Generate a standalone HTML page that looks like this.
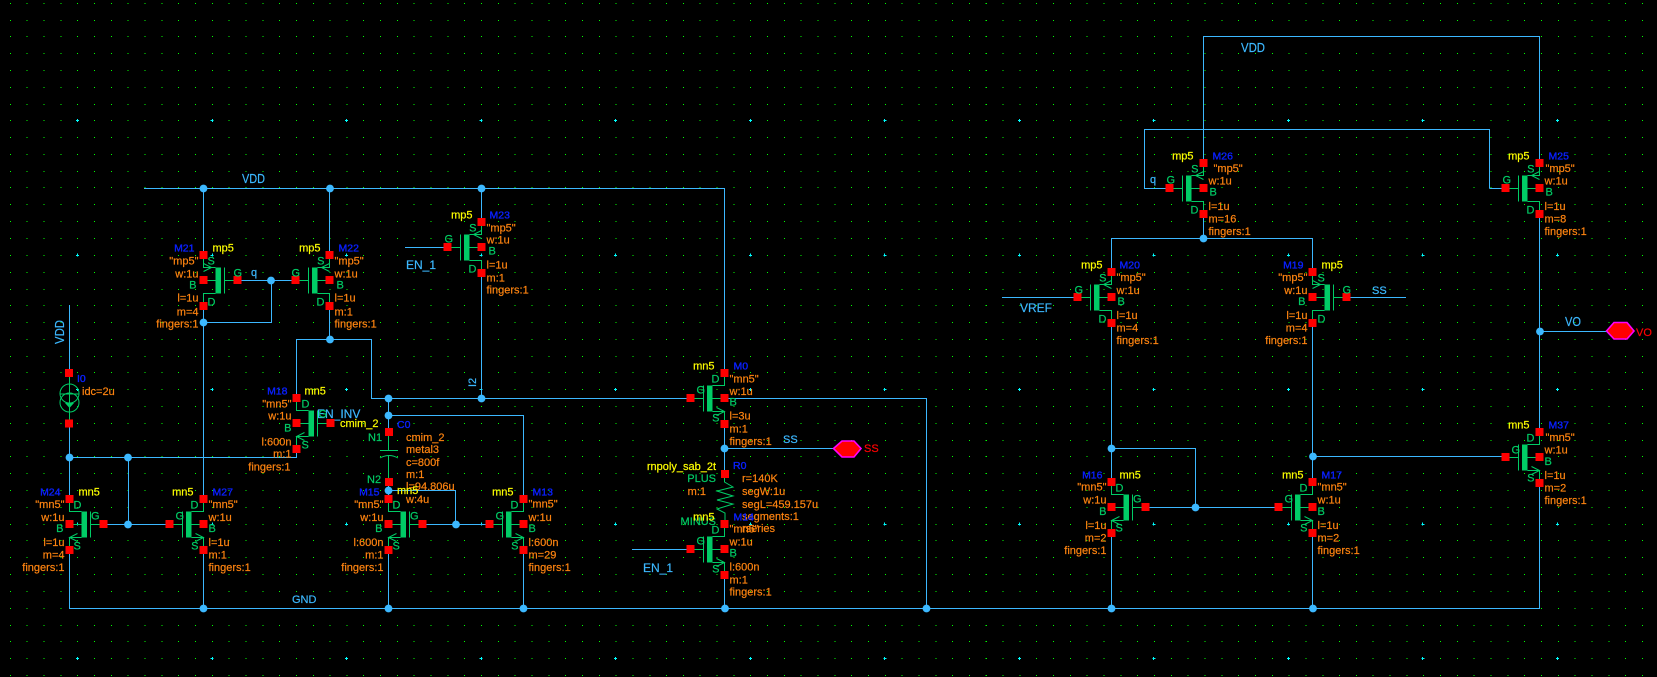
<!DOCTYPE html>
<html><head><meta charset="utf-8"><title>Schematic</title>
<style>
html,body{margin:0;padding:0;background:#000;width:1657px;height:677px;overflow:hidden}
svg{display:block}
text{font:11px "Liberation Sans",sans-serif;fill:#ff8410;stroke:#ff8410;stroke-width:.2px}
.e{text-anchor:end}
.o{fill:#ff8410}
.y{fill:#ffff00;stroke:#ffff00}
.b{fill:#0a20ff;stroke:#0a20ff;font-size:10.5px;stroke-width:.35px}
.g{fill:#00cc66;stroke:#00cc66}
.w{fill:#3cb8ff;stroke:#3cb8ff}
.l{fill:#3cb8ff;stroke:#3cb8ff;font-size:12px}
.t{fill:#3cb8ff;stroke:#3cb8ff;font-size:13px}
.r{fill:#ff0000;stroke:#ff0000}
</style></head><body>
<svg xmlns="http://www.w3.org/2000/svg" width="1657" height="677" viewBox="0 0 1657 677">
<defs>
<g id="pm" shape-rendering="crispEdges">
<path d="M0-25V-13H12M0 25V13H12M0 0H12M21-13V13M21 0H34" fill="none" stroke="#00cc66"/>
<rect x="12" y="-13" width="5.5" height="26" fill="#00cc66"/>
<path d="M0-17L8-13L0-9" fill="none" stroke="#00cc66" shape-rendering="auto"/>
<path d="M-4-29.5h8v8h-8zM-4-4.5h8v8h-8zM-4 21.5h8v8h-8zM30-4.5h8v8h-8z" fill="#ff0000"/>
</g>
<g id="nm" shape-rendering="crispEdges">
<path d="M0-25V-13H12M0 25V13H12M0 0H12M21-13V13M21 0H34" fill="none" stroke="#00cc66"/>
<rect x="12" y="-13" width="5.5" height="26" fill="#00cc66"/>
<path d="M8 9L0 13L8 17" fill="none" stroke="#00cc66" shape-rendering="auto"/>
<path d="M-4-29.5h8v8h-8zM-4-4.5h8v8h-8zM-4 21.5h8v8h-8zM30-4.5h8v8h-8z" fill="#ff0000"/>
</g>
</defs>
<rect width="1657" height="677" fill="#000"/>
<!-- grid -->
<path shape-rendering="crispEdges" fill="none" stroke="#00ff00" stroke-width="1" stroke-dasharray="1 15.825" d="M9.9 3.5H1657M9.9 20.5H1657M9.9 36.5H1657M9.9 53.5H1657M9.9 70.5H1657M9.9 87.5H1657M9.9 104.5H1657M9.9 120.5H1657M9.9 137.5H1657M9.9 154.5H1657M9.9 171.5H1657M9.9 187.5H1657M9.9 204.5H1657M9.9 221.5H1657M9.9 238.5H1657M9.9 255.5H1657M9.9 272.5H1657M9.9 289.5H1657M9.9 305.5H1657M9.9 322.5H1657M9.9 339.5H1657M9.9 356.5H1657M9.9 372.5H1657M9.9 389.5H1657M9.9 406.5H1657M9.9 423.5H1657M9.9 440.5H1657M9.9 456.5H1657M9.9 473.5H1657M9.9 490.5H1657M9.9 507.5H1657M9.9 524.5H1657M9.9 540.5H1657M9.9 557.5H1657M9.9 574.5H1657M9.9 591.5H1657M9.9 608.5H1657M9.9 625.5H1657M9.9 641.5H1657M9.9 658.5H1657M9.9 675.5H1657"/>
<path shape-rendering="crispEdges" fill="none" stroke="#00ffff" stroke-width="1" stroke-dasharray="3 131.55" d="M76 120.5H1657M76 255.5H1657M76 389.5H1657M76 524.5H1657M76 658.5H1657M77.5 119V677M212.5 119V677M346.5 119V677M481.5 119V677M615.5 119V677M750.5 119V677M884.5 119V677M1019.5 119V677M1153.5 119V677M1288.5 119V677M1422.5 119V677M1557.5 119V677"/>
<!-- wires -->
<path shape-rendering="crispEdges" fill="none" stroke="#3cb8ff" stroke-width="1" d="
M144 188.5H724.5V373
M203.5 188V255M203.5 305V499M203.5 549V608
M203.5 322.5H271.5V280.5M237 280.5H296
M329.5 188V255M329.5 305V339.5
M296.5 398V339.5H371.5V398.5H691
M388.5 398V432M388.5 415.5H523.5V499
M481.5 188V222M481.5 272V398
M405 247.5H447
M388.5 481V499M388.5 549V608
M388.5 490.5H455.5V524.5M422 524.5H490
M296.5 449V457.5H69.5
M128.5 457.5V524.5M103 524.5H170
M69.5 305V373M69.5 423V499M69.5 549V608.5H1539.5V482M1539.5 432V213M1539.5 163V36.5H1203.5V163
M523.5 549V608
M724.5 423V474M724.5 448.5H833
M724.5 575V608M632 549.5H691
M725 398.5H926.5V608
M1489.5 188.5V129.5H1144.5V188.5H1170M1489.5 188.5H1506
M1203.5 213V238.5M1111.5 272V238.5H1312.5V272
M1002 297.5H1078M1346 297.5H1406
M1111.5 322V482M1312.5 322V482
M1111.5 533V608M1312.5 533V608
M1111.5 448.5H1195.5V507.5M1145 507.5H1280
M1312.5 456.5H1506
M1539.5 331.5H1606"/>
<!-- junction dots -->
<g fill="#3cb8ff">
<circle cx="203.5" cy="188.5" r="3.9"/><circle cx="330" cy="188.5" r="3.9"/><circle cx="481.5" cy="188.5" r="3.9"/>
<circle cx="271" cy="280.5" r="3.9"/><circle cx="203.5" cy="322.5" r="3.9"/><circle cx="330" cy="339.5" r="3.9"/>
<circle cx="388.5" cy="398.5" r="3.9"/><circle cx="481.5" cy="398.5" r="3.9"/><circle cx="388.5" cy="415.5" r="3.9"/>
<circle cx="69.5" cy="457.5" r="3.9"/><circle cx="128" cy="457.5" r="3.9"/><circle cx="128" cy="524.5" r="3.9"/>
<circle cx="388.5" cy="490.5" r="3.9"/><circle cx="456" cy="524.5" r="3.9"/>
<circle cx="203.5" cy="608.5" r="3.9"/><circle cx="388.5" cy="608.5" r="3.9"/><circle cx="523.5" cy="608.5" r="3.9"/><circle cx="725" cy="608.5" r="3.9"/><circle cx="926.5" cy="608.5" r="3.9"/><circle cx="1111.5" cy="608.5" r="3.9"/><circle cx="1313" cy="608.5" r="3.9"/>
<circle cx="724.5" cy="448.5" r="3.9"/><circle cx="1203.5" cy="238.5" r="3.9"/><circle cx="1111.5" cy="448.5" r="3.9"/><circle cx="1195.5" cy="507.5" r="3.9"/><circle cx="1313" cy="456.5" r="3.9"/><circle cx="1540" cy="331.5" r="3.9"/>
</g>
<!-- wire labels -->
<text class="t" x="242" y="183" textLength="23" lengthAdjust="spacingAndGlyphs">VDD</text>
<text class="t" x="1241" y="52" textLength="24" lengthAdjust="spacingAndGlyphs">VDD</text>
<text class="w" x="292" y="603">GND</text>
<text class="w" x="251" y="276">q</text>
<text class="w" x="1150" y="183">q</text>
<text class="t" transform="translate(64 344) rotate(-90)" x="0" y="0" textLength="24" lengthAdjust="spacingAndGlyphs">VDD</text>
<text class="w" transform="translate(476 387) rotate(-90)" x="0" y="0">I2</text>
<text class="l" x="406" y="269">EN_1</text>
<text class="l" x="643" y="572">EN_1</text>
<text class="l" x="1020" y="312">VREF</text>
<text class="l" x="317" y="418">EN_INV</text>
<text class="w" x="1372" y="294">SS</text>
<text class="w" x="783" y="443">SS</text>
<text class="t" x="1565" y="326" textLength="16" lengthAdjust="spacingAndGlyphs">VO</text>
<!-- pins -->
<path d="M833.5 448.5L842 441H854L861 448.5L854 457H842Z" fill="#ff0000" stroke="#ff00ff" stroke-width="1.6"/>
<text class="r" x="864" y="452">SS</text>
<path d="M1606.5 331L1614 322.5H1627L1634 331L1627 339H1614Z" fill="#ff0000" stroke="#ff00ff" stroke-width="1.6"/>
<text class="r" x="1636" y="336">VO</text>
<!-- I0 -->
<g fill="none" stroke="#00cc66">
<path d="M69.5 373V423M60 394H79"/>
<circle cx="69.5" cy="393.5" r="9.5"/><circle cx="69.5" cy="402.5" r="9.5"/>
</g>
<path d="M65 403H74L69.5 408Z" fill="#00cc66"/>
<path shape-rendering="crispEdges" fill="#ff0000" d="M65 369h8v8h-8zM65 419.5h8v8h-8z"/>
<text class="b" x="77" y="382">I0</text>
<text x="82" y="395">idc=2u</text>
<!-- C0 -->
<path d="M388.5 432V450M380 450.5H398M380 458Q389 453 398 458M388.5 456V482" fill="none" stroke="#00cc66"/>
<path shape-rendering="crispEdges" fill="#ff0000" d="M385 428h8v8h-8zM385 478h8v8h-8z"/>
<text class="b" x="397" y="428">C0</text>
<text x="406" y="441">cmim_2</text><text x="406" y="453">metal3</text><text x="406" y="466">c=800f</text><text x="406" y="478">m:1</text><text x="406" y="490">l=94.806u</text><text x="406" y="503">w:4u</text>
<text class="y" x="397" y="494">mn5</text>
<text class="y" x="340" y="427">cmim_2</text>
<text class="g" x="368" y="441">N1</text><text class="g" x="367" y="483">N2</text>
<!-- R0 -->
<path d="M724.5 474V482L733 487L717 491L733 496L717 500L733 504L717 509L725 513V524" fill="none" stroke="#00cc66"/>
<path shape-rendering="crispEdges" fill="#ff0000" d="M721 470h8v8h-8z"/>
<text class="y e" x="716" y="470">rnpoly_sab_2t</text>
<text class="b" x="733" y="469">R0</text>
<text class="g e" x="716" y="482">PLUS</text>
<text class="e" x="706" y="495">m:1</text>
<text class="g e" x="716" y="525">MINUS</text>
<text x="742" y="482">r=140K</text><text x="742" y="495">segW:1u</text><text x="742" y="508">segL=459.157u</text><text x="742" y="520">segments:1</text><text x="742" y="532">rseries</text>

<!-- M21 -->
<g transform="translate(203.5 280.5)"><use href="#pm"/>
<text class="b e" x="-9" y="-29">M21</text><text class="y" x="9" y="-29">mp5</text><text class="e" x="-5" y="-16">"mp5"</text><text class="g" x="4" y="-16">S</text><text class="e" x="-5" y="-3">w:1u</text><text class="g e" x="-7" y="8">B</text><text class="g" x="30" y="-4">G</text><text class="e" x="-5" y="21">l=1u</text><text class="g" x="4" y="25">D</text><text class="e" x="-5" y="35">m=4</text><text class="e" x="-5" y="47">fingers:1</text></g>
<!-- M22 -->
<g transform="translate(329.5 280.5)"><use href="#pm" transform="scale(-1 1)"/>
<text class="b" x="9" y="-29">M22</text><text class="y e" x="-9" y="-29">mp5</text><text x="5" y="-16">"mp5"</text><text class="g e" x="-5" y="-16">S</text><text x="5" y="-3">w:1u</text><text class="g" x="7" y="8">B</text><text class="g" x="-38" y="-4">G</text><text x="5" y="21">l=1u</text><text class="g e" x="-5" y="25">D</text><text x="5" y="35">m:1</text><text x="5" y="47">fingers:1</text></g>
<!-- M23 -->
<g transform="translate(481.5 247.5)"><use href="#pm" transform="scale(-1 1)"/>
<text class="b" x="8" y="-29">M23</text><text class="y e" x="-9" y="-29">mp5</text><text x="5" y="-16">"mp5"</text><text class="g e" x="-5" y="-16">S</text><text x="5" y="-4">w:1u</text><text class="g" x="7" y="7">B</text><text class="g" x="-37" y="-5">G</text><text x="5" y="21">l=1u</text><text class="g e" x="-5" y="25">D</text><text x="5" y="34">m:1</text><text x="5" y="46">fingers:1</text></g>
<!-- M18 -->
<g transform="translate(296.5 423.5)"><use href="#nm"/>
<text class="b e" x="-9" y="-29">M18</text><text class="y" x="8" y="-29">mn5</text><text class="e" x="-5" y="-16">"mn5"</text><text class="g" x="5" y="-16">D</text><text class="e" x="-5" y="-4">w:1u</text><text class="g e" x="-5" y="8">B</text><text class="g" x="22" y="-6">G</text><text class="e" x="-5" y="22">l:600n</text><text class="g" x="5" y="25">S</text><text class="e" x="-5" y="34">m:1</text><text class="e" x="-6" y="47">fingers:1</text></g>
<!-- M24 -->
<g transform="translate(69.5 524.5)"><use href="#nm"/>
<text class="b e" x="-9" y="-29">M24</text><text class="y" x="9" y="-29">mn5</text><text class="e" x="-5" y="-16.5">"mn5"</text><text class="g" x="4" y="-16">D</text><text class="e" x="-5" y="-3.5">w:1u</text><text class="g e" x="-6" y="7.5">B</text><text class="g" x="21.5" y="-5">G</text><text class="e" x="-5" y="21.5">l=1u</text><text class="g" x="4" y="25">S</text><text class="e" x="-5" y="34">m=4</text><text class="e" x="-5" y="46.5">fingers:1</text></g>
<!-- M27 -->
<g transform="translate(203.5 524.5)"><use href="#nm" transform="scale(-1 1)"/>
<text class="b" x="9" y="-29">M27</text><text class="y e" x="-10" y="-29">mn5</text><text x="5" y="-16.5">"mn5"</text><text class="g e" x="-5" y="-16">D</text><text x="5" y="-3.5">w:1u</text><text class="g" x="5" y="7.5">B</text><text class="g" x="-28" y="-5">G</text><text x="5" y="21.5">l=1u</text><text class="g e" x="-5" y="25">S</text><text x="5" y="34">m:1</text><text x="5" y="46.5">fingers:1</text></g>
<!-- M15 -->
<g transform="translate(388.5 524.5)"><use href="#nm"/>
<text class="b e" x="-9" y="-29">M15</text><text class="e" x="-5" y="-16.5">"mn5"</text><text class="g" x="4" y="-16">D</text><text class="e" x="-5" y="-3.5">w:1u</text><text class="g e" x="-6" y="7.5">B</text><text class="g" x="21.5" y="-5">G</text><text class="e" x="-5" y="21.5">l:600n</text><text class="g" x="4" y="25">S</text><text class="e" x="-5" y="34">m:1</text><text class="e" x="-5" y="46.5">fingers:1</text></g>
<!-- M13 -->
<g transform="translate(523.5 524.5)"><use href="#nm" transform="scale(-1 1)"/>
<text class="b" x="9" y="-29">M13</text><text class="y e" x="-10" y="-29">mn5</text><text x="5" y="-17">"mn5"</text><text class="g e" x="-5" y="-16">D</text><text x="5" y="-3.5">w:1u</text><text class="g" x="5" y="7.5">B</text><text class="g" x="-28" y="-5">G</text><text x="5" y="21.5">l:600n</text><text class="g e" x="-5" y="25">S</text><text x="5" y="34">m=29</text><text x="5" y="46.5">fingers:1</text></g>
<!-- M0 -->
<g transform="translate(724.5 398.5)"><use href="#nm" transform="scale(-1 1)"/>
<text class="b" x="9" y="-29">M0</text><text class="y e" x="-10" y="-29">mn5</text><text x="5" y="-16">"mn5"</text><text class="g e" x="-5" y="-16">D</text><text x="5" y="-3.5">w:1u</text><text class="g" x="5" y="7">B</text><text class="g" x="-28" y="-5">G</text><text x="5" y="21">l=3u</text><text class="g e" x="-5" y="23">S</text><text x="5" y="34">m:1</text><text x="5" y="46.5">fingers:1</text></g>
<!-- M14 -->
<g transform="translate(724.5 549.5)"><use href="#nm" transform="scale(-1 1)"/>
<text class="b" x="9" y="-29">M14</text><text class="y e" x="-10" y="-29">mn5</text><text x="5" y="-17">"mn5"</text><text class="g e" x="-5" y="-16">D</text><text x="5" y="-4">w:1u</text><text class="g" x="5" y="7">B</text><text class="g" x="-28" y="-5">G</text><text x="5" y="21">l:600n</text><text class="g e" x="-5" y="23">S</text><text x="5" y="34">m:1</text><text x="5" y="46">fingers:1</text></g>
<!-- M26 -->
<g transform="translate(1203.5 188.5)"><use href="#pm" transform="scale(-1 1)"/>
<text class="b" x="9" y="-29">M26</text><text class="y e" x="-10" y="-29">mp5</text><text x="10" y="-16.5">"mp5"</text><text class="g e" x="-5" y="-16">S</text><text x="5" y="-4">w:1u</text><text class="g" x="6" y="7">B</text><text class="g" x="-37" y="-5">G</text><text x="5" y="21.5">l=1u</text><text class="g e" x="-5" y="25">D</text><text x="5" y="34">m=16</text><text x="5" y="46.5">fingers:1</text></g>
<!-- M25 -->
<g transform="translate(1539.5 188.5)"><use href="#pm" transform="scale(-1 1)"/>
<text class="b" x="9" y="-29">M25</text><text class="y e" x="-10" y="-29">mp5</text><text x="6" y="-16.5">"mp5"</text><text class="g e" x="-5" y="-16">S</text><text x="5" y="-4">w:1u</text><text class="g" x="6" y="7">B</text><text class="g" x="-37" y="-5">G</text><text x="5" y="21.5">l=1u</text><text class="g e" x="-5" y="25">D</text><text x="5" y="34">m=8</text><text x="5" y="46.5">fingers:1</text></g>
<!-- M20 -->
<g transform="translate(1111.5 297.5)"><use href="#pm" transform="scale(-1 1)"/>
<text class="b" x="8" y="-29">M20</text><text class="y e" x="-9" y="-29">mp5</text><text x="5" y="-16.5">"mp5"</text><text class="g e" x="-5" y="-16">S</text><text x="5" y="-3.5">w:1u</text><text class="g" x="6" y="7.5">B</text><text class="g" x="-37" y="-4">G</text><text x="5" y="21.5">l=1u</text><text class="g e" x="-5" y="25">D</text><text x="5" y="34">m=4</text><text x="5" y="46.5">fingers:1</text></g>
<!-- M19 -->
<g transform="translate(1312.5 297.5)"><use href="#pm"/>
<text class="b e" x="-9" y="-29">M19</text><text class="y" x="9" y="-29">mp5</text><text class="e" x="-5" y="-16.5">"mp5"</text><text class="g" x="5" y="-16">S</text><text class="e" x="-5" y="-3.5">w:1u</text><text class="g e" x="-7" y="7.5">B</text><text class="g" x="30" y="-4">G</text><text class="e" x="-5" y="21.5">l=1u</text><text class="g" x="5" y="25">D</text><text class="e" x="-5" y="34">m=4</text><text class="e" x="-5" y="46.5">fingers:1</text></g>
<!-- M37 -->
<g transform="translate(1539.5 457.5)"><use href="#nm" transform="scale(-1 1)"/>
<text class="b" x="9" y="-29">M37</text><text class="y e" x="-10" y="-29">mn5</text><text x="6" y="-16.5">"mn5"</text><text class="g e" x="-5" y="-16">D</text><text x="5" y="-4">w:1u</text><text class="g" x="5" y="7.5">B</text><text class="g" x="-28" y="-4">G</text><text x="5" y="21.5">l=1u</text><text class="g e" x="-5" y="24">S</text><text x="5" y="34">m=2</text><text x="5" y="46.5">fingers:1</text></g>
<!-- M16 -->
<g transform="translate(1111.5 507.5)"><use href="#nm"/>
<text class="b e" x="-9" y="-29">M16</text><text class="y" x="8" y="-29">mn5</text><text class="e" x="-5" y="-17">"mn5"</text><text class="g" x="4" y="-16">D</text><text class="e" x="-5" y="-4">w:1u</text><text class="g e" x="-5" y="7.5">B</text><text class="g" x="21.5" y="-5">G</text><text class="e" x="-5" y="21.5">l=1u</text><text class="g" x="4" y="24">S</text><text class="e" x="-5" y="34">m=2</text><text class="e" x="-5" y="46.5">fingers:1</text></g>
<!-- M17 -->
<g transform="translate(1312.5 507.5)"><use href="#nm" transform="scale(-1 1)"/>
<text class="b" x="9" y="-29">M17</text><text class="y e" x="-9" y="-29">mn5</text><text x="5" y="-17">"mn5"</text><text class="g e" x="-5" y="-16">D</text><text x="5" y="-4">w:1u</text><text class="g" x="5" y="7.5">B</text><text class="g" x="-28" y="-5">G</text><text x="5" y="21.5">l=1u</text><text class="g e" x="-5" y="24">S</text><text x="5" y="34">m=2</text><text x="5" y="46.5">fingers:1</text></g>
</svg>
</body></html>
